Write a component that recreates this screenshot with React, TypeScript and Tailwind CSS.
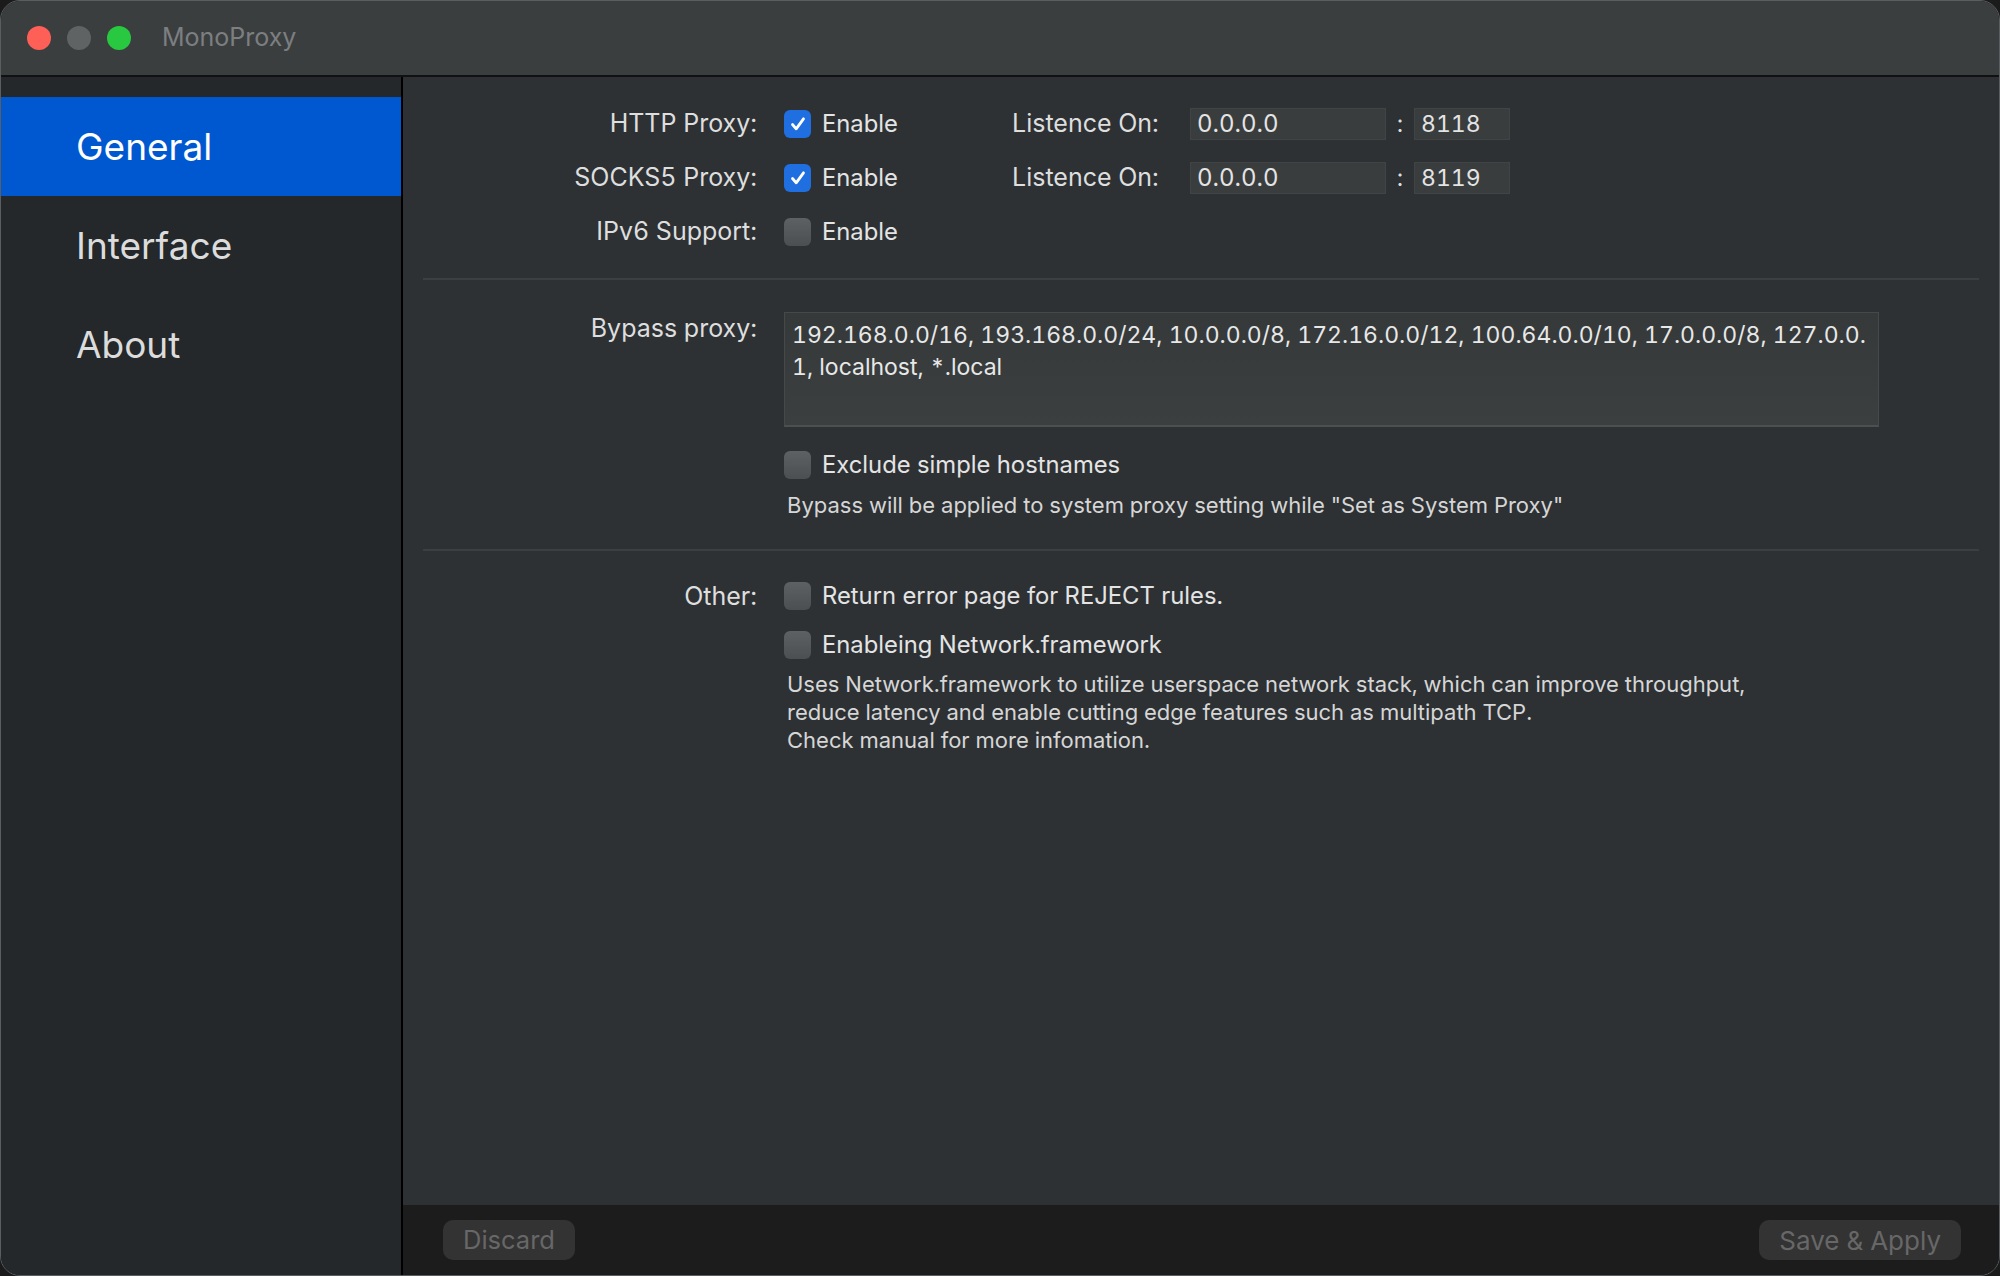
import React from "react";

const font = { fontFamily: "Inter, 'Noto Sans', sans-serif", fontVariantNumeric: "tabular-nums" };

const Check = ({ on }: { on?: boolean }) =>
  on ? (
    <div className="w-[27px] h-[28px] rounded-[6px] bg-[#1f6fe0] flex items-center justify-center shrink-0">
      <svg width="18" height="18" viewBox="0 0 18 18">
        <path d="M3.5 9.5 L7.2 13.8 L14.5 3.8" fill="none" stroke="white" strokeWidth="2.8" strokeLinecap="round" strokeLinejoin="round" />
      </svg>
    </div>
  ) : (
    <div className="w-[27px] h-[28px] rounded-[6px] bg-gradient-to-b from-[#5d6163] to-[#4b4f51] shrink-0" />
  );

const Label = ({ children }: { children: React.ReactNode }) => (
  <div className="w-[334px] shrink-0 text-right text-[25px] text-[#dedede]">{children}</div>
);

const ProxyRow = ({ label, on, port }: { label: string; on: boolean; port: string }) => (
  <div className="flex items-center h-[54px]">
    <Label>{label}</Label>
    <div className="ml-[27px] w-[228px] flex items-center gap-[11px]">
      <Check on={on} />
      <span className="text-[#e4e4e4]">Enable</span>
    </div>
    <span className="w-[151px] text-[25px] text-[#dedede]">Listence On:</span>
    <div className="ml-[27px] w-[196px] h-[32px] bg-[#393d3e] border border-[#404445] flex items-center pl-[6px] text-[24px] text-[#e4e4e4]">0.0.0.0</div>
    <span className="w-[28px] text-center text-[#dedede]">:</span>
    <div className="w-[96px] h-[32px] bg-[#393d3e] border border-[#404445] flex items-center pl-[6px] text-[23px] text-[#e4e4e4]">{port}</div>
  </div>
);

export default function App() {
  return (
    <div className="w-[2000px] h-[1276px] bg-[#1b1b1b] text-[23.8px]" style={font}>
      <div className="w-full h-full rounded-[20px] overflow-hidden border border-[#5b5e60] flex flex-col">
        {/* title bar */}
        <div className="h-[76px] shrink-0 bg-[#3b3e3f] border-b-2 border-[#111] flex items-center pl-[26px]">
          <div className="flex gap-[16px]">
            <div className="w-[24px] h-[24px] rounded-full bg-[#fe5f57]" />
            <div className="w-[24px] h-[24px] rounded-full bg-[#5f6364]" />
            <div className="w-[24px] h-[24px] rounded-full bg-[#28c840]" />
          </div>
          <span className="ml-[31px] text-[25px] text-[#7c7f81]">MonoProxy</span>
        </div>

        <div className="flex flex-1 min-h-0">
          {/* sidebar */}
          <div className="w-[402px] shrink-0 bg-[#24282a] border-r-2 border-black pt-[20px]">
            {["General", "Interface", "About"].map((n, i) => (
              <div
                key={n}
                className={
                  "h-[99px] flex items-center pl-[75px] text-[37px] " +
                  (i === 0 ? "bg-[#0058d0] text-white" : "text-[#dcdcdc]")
                }
              >
                {n}
              </div>
            ))}
          </div>

          {/* main */}
          <div className="flex-1 flex flex-col bg-[#2d3134]">
            <div className="flex-1 px-[20px] pt-[20px]">
              <ProxyRow label="HTTP Proxy:" on port="8118" />
              <ProxyRow label="SOCKS5 Proxy:" on port="8119" />
              <div className="flex items-center h-[54px]">
                <Label>IPv6 Support:</Label>
                <div className="ml-[27px] flex items-center gap-[11px]">
                  <Check />
                  <span className="text-[#e4e4e4]">Enable</span>
                </div>
              </div>

              <div className="mt-[19px] h-[2px] bg-[#3b3f42]" />

              <div className="flex mt-[32px]">
                <div className="w-[334px] shrink-0 text-right text-[25px] text-[#dedede] leading-[32px]">Bypass proxy:</div>
                <div className="ml-[27px] flex flex-col">
                  <div className="w-[1095px] h-[115px] bg-gradient-to-b from-[#353939] to-[#3b3f40] border border-[#45494a] border-b-2 border-b-[#4c5051] pl-[7px] pt-[6px] text-[23px] text-[#e8e8e8] leading-[32px] whitespace-nowrap">
                    <div>192.168.0.0/16, 193.168.0.0/24, 10.0.0.0/8, 172.16.0.0/12, 100.64.0.0/10, 17.0.0.0/8, 127.0.0.</div>
                    <div>1, localhost, *.local</div>
                  </div>
                  <div className="mt-[18px] h-[40px] flex items-center gap-[11px]">
                    <Check />
                    <span className="text-[#e4e4e4]">Exclude simple hostnames</span>
                  </div>
                  <div className="mt-[6px] pl-[3px] text-[22px] leading-[28px] text-[#d6d6d6]">
                    Bypass will be applied to system proxy setting while "Set as System Proxy"
                  </div>
                </div>
              </div>

              <div className="mt-[30px] h-[2px] bg-[#3b3f42]" />

              <div className="flex mt-[25px]">
                <div className="w-[334px] shrink-0 text-right text-[25px] text-[#dedede] leading-[40px]">Other:</div>
                <div className="ml-[27px] flex flex-col">
                  <div className="h-[40px] flex items-center gap-[11px]">
                    <Check />
                    <span className="text-[#e4e4e4]">Return error page for REJECT rules.</span>
                  </div>
                  <div className="mt-[9px] h-[40px] flex items-center gap-[11px]">
                    <Check />
                    <span className="text-[#e4e4e4]">Enableing Network.framework</span>
                  </div>
                  <div className="mt-[5px] pl-[3px] text-[22px] leading-[28px] text-[#d6d6d6]">
                    <div>Uses Network.framework to utilize userspace network stack, which can improve throughput,</div>
                    <div>reduce latency and enable cutting edge features such as multipath TCP.</div>
                    <div>Check manual for more infomation.</div>
                  </div>
                </div>
              </div>
            </div>

            {/* bottom bar */}
            <div className="h-[70px] shrink-0 bg-[#1c1c1c] flex items-center justify-between pl-[40px] pr-[38px]">
              <div className="h-[40px] px-[20px] rounded-[10px] bg-[#333333] text-[#676767] text-[25.5px] flex items-center">Discard</div>
              <div className="h-[40px] px-[20px] rounded-[10px] bg-[#333333] text-[#676767] text-[26px] flex items-center">Save &amp; Apply</div>
            </div>
          </div>
        </div>
      </div>
    </div>
  );
}
